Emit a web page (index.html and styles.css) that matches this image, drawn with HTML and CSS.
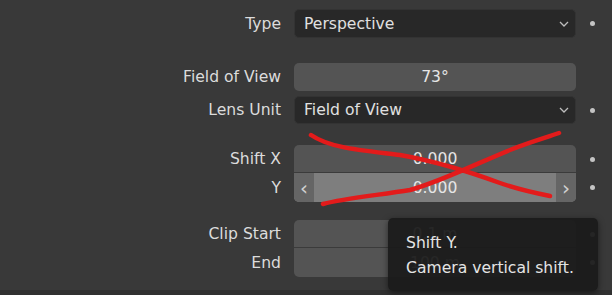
FILE: index.html
```html
<!DOCTYPE html>
<html lang="en">
<head>
    <meta charset="UTF-8">
    <title>Camera Lens</title>
    <link rel="stylesheet" href="styles.css">
</head>
<body>
    <main class="panel">
        <div class="row row-type">
            <span class="label">Type</span>
            <div class="field dropdown">
                <span>Perspective</span>
                <svg class="chevron" width="10" height="6" viewBox="0 0 10 6"><path d="M1 1 L5 5 L9 1" fill="none" stroke="#bdbdbd" stroke-width="1.3"/></svg>
            </div>
            <span class="dot"></span>
        </div>

        <div class="row row-fov">
            <span class="label">Field of View</span>
            <div class="field slider">73°</div>
            <span class="dot hidden"></span>
        </div>
        <div class="row row-lens">
            <span class="label">Lens Unit</span>
            <div class="field dropdown">
                <span>Field of View</span>
                <svg class="chevron" width="10" height="6" viewBox="0 0 10 6"><path d="M1 1 L5 5 L9 1" fill="none" stroke="#bdbdbd" stroke-width="1.3"/></svg>
            </div>
            <span class="dot"></span>
        </div>

        <div class="group group-shift">
            <div class="row">
                <span class="label">Shift X</span>
                <div class="field num top">0.000</div>
                <span class="dot"></span>
            </div>
            <div class="row">
                <span class="label">Y</span>
                <div class="field num bottom hover">
                    <span class="arrow">&lsaquo;</span>
                    <span class="value">0.000</span>
                    <span class="arrow">&rsaquo;</span>
                </div>
                <span class="dot"></span>
            </div>
        </div>

        <div class="group group-clip">
            <div class="row">
                <span class="label">Clip Start</span>
                <div class="field num top">0.1 m</div>
                <span class="dot"></span>
            </div>
            <div class="row">
                <span class="label">End</span>
                <div class="field num bottom">100 m</div>
                <span class="dot"></span>
            </div>
        </div>
    </main>
    <footer class="strip"></footer>

    <div class="tooltip">
        <p>Shift Y.</p>
        <p>Camera vertical shift.</p>
    </div>

    <svg class="scribble" width="612" height="295" viewBox="0 0 612 295">
        <path d="M311 135 C330 148 360 150 400 155 C440 162 470 172 500 183 C520 190 540 194 550 196" fill="none" stroke="#e31b1b" stroke-width="4.5" stroke-linecap="round"/>
        <path d="M323 204 C345 198 380 195 410 190 C440 182 480 162 510 150 C530 142 548 137 559 133" fill="none" stroke="#e31b1b" stroke-width="4.5" stroke-linecap="round"/>
    </svg>
</body>
</html>
```

FILE: styles.css
```css
body {
    margin: 0;
    width: 612px;
    height: 295px;
    overflow: hidden;
    background-color: #393939;
    font-family: "DejaVu Sans", sans-serif;
    font-size: 15.6px;
    color: #e0e0e0;
    position: relative;
}
.panel {
    display: flex;
    flex-direction: column;
    padding-top: 9px;
    height: 290px;
    box-sizing: border-box;
}
.row {
    display: flex;
    align-items: center;
    height: 28px;
}
.row-type {
    height: 29px;
}
.row-fov {
    margin-top: 25px;
}
.row-lens {
    margin-top: 5px;
}
.group-shift {
    margin-top: 21px;
}
.group-clip {
    margin-top: 18px;
}
.group .row + .row {
    height: 29px;
}
.label {
    width: 294px;
    text-align: right;
    padding-right: 13px;
    box-sizing: border-box;
    color: #dcdcdc;
}
.field {
    width: 282px;
    height: 100%;
    box-sizing: border-box;
    border-radius: 5px;
    display: flex;
    align-items: center;
}
.dropdown {
    background-color: #282828;
    border: 1px solid #333;
    padding: 0 6px 0 9px;
    justify-content: space-between;
}
.slider,
.num {
    background-color: #545454;
    justify-content: center;
    color: #e6e6e6;
}
.num.top {
    border-radius: 5px 5px 0 0;
    border-bottom: 1px solid #3b3b3b;
}
.num.bottom {
    border-radius: 0 0 5px 5px;
}
.num.hover {
    background-color: #7e7e7e;
    justify-content: space-between;
    overflow: hidden;
}
.num.hover .arrow {
    width: 20px;
    height: 100%;
    background-color: #656565;
    display: flex;
    align-items: center;
    justify-content: center;
    font-size: 20px;
    color: #d0d0d0;
}
.dot {
    width: 5px;
    height: 5px;
    border-radius: 50%;
    background-color: #c4c4c4;
    margin-left: 14px;
}
.dot.hidden {
    visibility: hidden;
}
.strip {
    height: 5px;
    background-color: #303030;
}
.tooltip {
    position: absolute;
    left: 388px;
    top: 218px;
    width: 210px;
    height: 73px;
    box-sizing: border-box;
    padding: 13px 18px;
    background-color: rgba(27, 27, 27, 0.94);
    border-radius: 5px;
    box-shadow: 0 2px 6px rgba(0, 0, 0, 0.5);
    color: #e4e4e4;
}
.tooltip p {
    margin: 0;
    line-height: 25px;
}
.scribble {
    position: absolute;
    left: 0;
    top: 0;
}
```
